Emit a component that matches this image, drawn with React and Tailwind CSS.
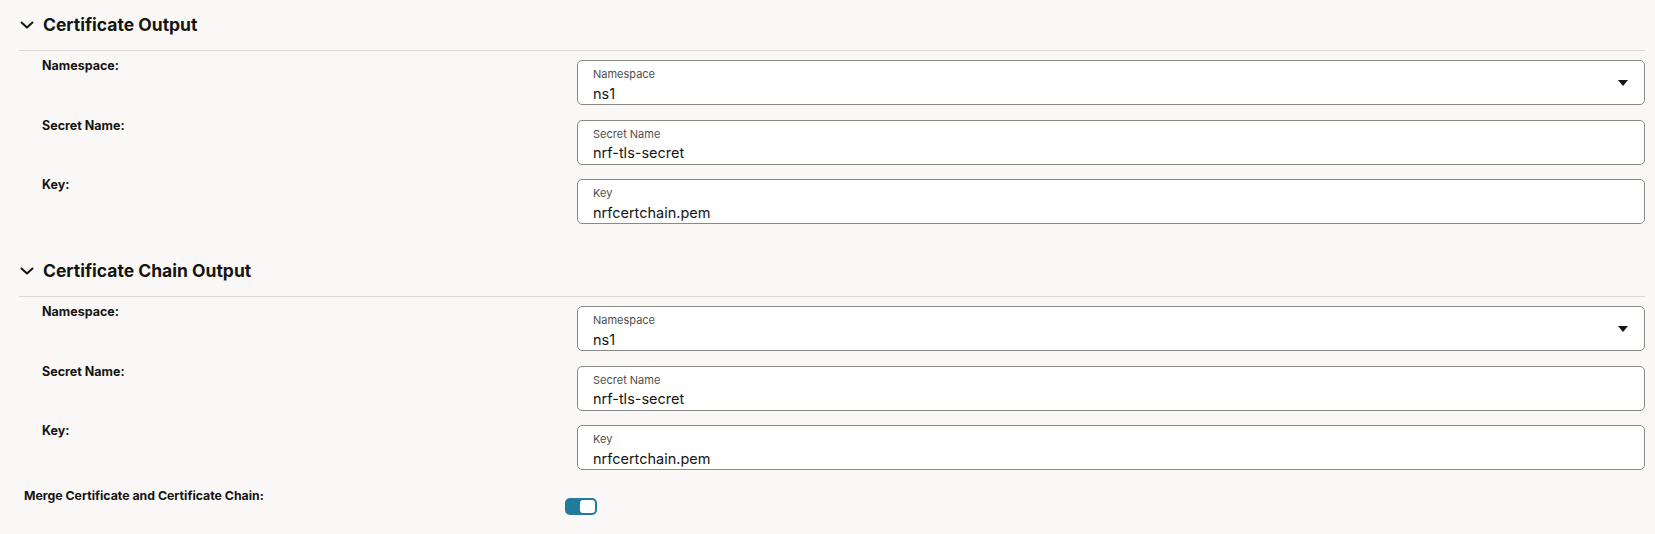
import React from "react";

function Chevron() {
  return (
    <svg width="14" height="8" viewBox="0 0 14 8" className="shrink-0">
      <path d="M1.5 1.5 L7 6.5 L12.5 1.5" fill="none" stroke="#161513" strokeWidth="2" strokeLinecap="round" strokeLinejoin="round" />
    </svg>
  );
}

function Field({ label, value, select }) {
  return (
    <div className="flex h-[45px] items-stretch rounded-[5px] border border-[#8b8985] bg-white pl-[15px] pr-[16px]">
      <div className="flex min-w-0 flex-1 flex-col pt-[7px]">
        <span className="text-[11px] leading-[13px] text-[#4f4d4a]">{label}</span>
        <span className="mt-[3.5px] text-[14.5px] leading-[18px] text-[#161513]">{value}</span>
      </div>
      {select && (
        <svg width="10" height="6" viewBox="0 0 10 6" className="shrink-0 self-center">
          <path d="M0 0 L10 0 L5 6 Z" fill="#161513" />
        </svg>
      )}
    </div>
  );
}

function Row({ label, value, select }) {
  return (
    <div className="flex">
      <div className="w-[558px] shrink-0 pl-[23px] text-[12.5px] font-bold leading-[12px] text-[#161513]">
        {label}
      </div>
      <div className="flex-1">
        <Field label={label.replace(":", "")} value={value} select={select} />
      </div>
    </div>
  );
}

function Section({ title }) {
  return (
    <div>
      <div className="flex h-[51px] items-center gap-[9px] border-b border-[#dcdad6] pl-[1px]">
        <Chevron />
        <h2 className="pb-[1px] text-[17.5px] font-bold leading-[22px] text-[#161513]">{title}</h2>
      </div>
      <div className="flex flex-col gap-[14.5px] pt-[9px]">
        <Row label="Namespace:" value="ns1" select />
        <Row label="Secret Name:" value="nrf-tls-secret" />
        <Row label="Key:" value="nrfcertchain.pem" />
      </div>
    </div>
  );
}

export default function App() {
  return (
    <div
      className="h-[534px] w-full overflow-hidden bg-[#f9f8f6] pl-[19px] pr-[10px]"
      style={{ fontFamily: "Inter, 'Noto Sans', sans-serif" }}
    >
      <Section title="Certificate Output" />
      <div className="h-[22px]" />
      <Section title="Certificate Chain Output" />
      <div className="flex pt-[19px]">
        <div className="w-[546px] shrink-0 pl-[5px] text-[12.3px] font-bold leading-[14px] text-[#161513]">
          Merge Certificate and Certificate Chain:
        </div>
        <div className="pt-[9px]">
          <div className="flex h-[17px] w-[32px] items-center justify-end rounded-[5px] bg-[#227a9c] pr-[2px]">
            <div className="h-[13px] w-[15px] rounded-[3px] bg-white" />
          </div>
        </div>
      </div>
    </div>
  );
}
